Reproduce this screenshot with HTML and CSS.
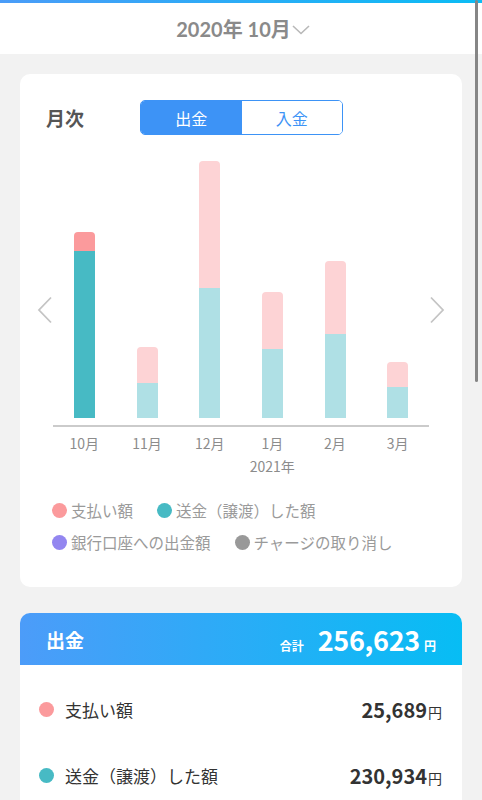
FILE: index.html
```html
<!DOCTYPE html>
<html lang="ja">
<head>
    <meta charset="UTF-8">
    <meta name="viewport" content="width=device-width, initial-scale=1.0">
    <title>月次レポート</title>
    <link rel="stylesheet" href="styles.css">
</head>
<body>
    <div class="topline"></div>
    <header class="month-header">
        <span class="month-title">2020年 10月</span>
        <svg class="month-caret" width="18" height="10" viewBox="0 0 18 10">
            <path d="M1 1 L9 8.5 L17 1" fill="none" stroke="#b8b8b8" stroke-width="1.6"/>
        </svg>
    </header>

    <main class="content">
        <section class="card chart-card">
            <div class="chart-head">
                <h2 class="chart-label">月次</h2>
                <div class="toggle">
                    <button class="toggle-btn active">出金</button>
                    <button class="toggle-btn">入金</button>
                </div>
            </div>

            <div class="chart-row">
                <svg class="chart-arrow" width="16" height="28" viewBox="0 0 16 28">
                    <path d="M14 1.5 L2 14 L14 26.5" fill="none" stroke="#c4c4c4" stroke-width="1.8"/>
                </svg>
                <div class="plot">
                    <div class="bars">
                        <div class="col">
                            <div class="bar current">
                                <div class="seg pay" style="height: 19px"></div>
                                <div class="seg send" style="height: 167px"></div>
                            </div>
                        </div>
                        <div class="col">
                            <div class="bar">
                                <div class="seg pay" style="height: 36px"></div>
                                <div class="seg send" style="height: 35px"></div>
                            </div>
                        </div>
                        <div class="col">
                            <div class="bar">
                                <div class="seg pay" style="height: 127px"></div>
                                <div class="seg send" style="height: 130px"></div>
                            </div>
                        </div>
                        <div class="col">
                            <div class="bar">
                                <div class="seg pay" style="height: 57px"></div>
                                <div class="seg send" style="height: 69px"></div>
                            </div>
                        </div>
                        <div class="col">
                            <div class="bar">
                                <div class="seg pay" style="height: 73px"></div>
                                <div class="seg send" style="height: 84px"></div>
                            </div>
                        </div>
                        <div class="col">
                            <div class="bar">
                                <div class="seg pay" style="height: 25px"></div>
                                <div class="seg send" style="height: 31px"></div>
                            </div>
                        </div>
                    </div>
                    <div class="axis"></div>
                    <div class="labels">
                        <span>10月</span>
                        <span>11月</span>
                        <span>12月</span>
                        <span>1月</span>
                        <span>2月</span>
                        <span>3月</span>
                        <span class="year">2021年</span>
                    </div>
                </div>
                <svg class="chart-arrow" width="16" height="28" viewBox="0 0 16 28">
                    <path d="M2 1.5 L14 14 L2 26.5" fill="none" stroke="#c4c4c4" stroke-width="1.8"/>
                </svg>
            </div>

            <ul class="legend">
                <li><span class="dot pay"></span>支払い額</li>
                <li><span class="dot send"></span>送金（譲渡）した額</li>
                <li><span class="dot bank"></span>銀行口座への出金額</li>
                <li><span class="dot cancel"></span>チャージの取り消し</li>
            </ul>
        </section>

        <section class="card total-card">
            <div class="total-head">
                <h2 class="total-title">出金</h2>
                <div class="total-sum">
                    <span class="sum-label">合計</span>
                    <span class="sum-value">256,623</span>
                    <span class="sum-yen">円</span>
                </div>
            </div>
            <ul class="breakdown">
                <li class="item">
                    <span class="dot pay"></span>
                    <span class="item-name">支払い額</span>
                    <span class="item-amount">25,689<small>円</small></span>
                </li>
                <li class="item">
                    <span class="dot send"></span>
                    <span class="item-name">送金（譲渡）した額</span>
                    <span class="item-amount">230,934<small>円</small></span>
                </li>
            </ul>
        </section>
    </main>

    <div class="scrollbar"></div>
</body>
</html>
```

FILE: styles.css
```css
* {
    margin: 0;
    padding: 0;
    box-sizing: border-box;
}

html {
    overflow: hidden;
}

body {
    font-family: "Noto Sans CJK JP", "Noto Sans", sans-serif;
    background-color: #f2f2f2;
    width: 482px;
    height: 800px;
    overflow: hidden;
    position: relative;
}

ul {
    list-style: none;
}

.topline {
    height: 3px;
    background: linear-gradient(90deg, #4a9cf8, #0bbcf4);
}

.month-header {
    height: 51px;
    background-color: white;
    display: flex;
    justify-content: center;
    align-items: center;
    gap: 1px;
    padding-left: 4px;
}

.month-title {
    font-family: Lato, "Noto Sans CJK JP", sans-serif;
    font-size: 20px;
    font-weight: bold;
    color: #8a8a8a;
}

.month-caret {
    margin-top: 2px;
}

.content {
    padding: 20px 20px 0;
}

.card {
    background-color: white;
    border-radius: 10px;
    overflow: hidden;
}

/* chart card */

.chart-card {
    padding: 26px 0 34px;
}

.chart-head {
    display: flex;
    align-items: center;
    height: 35px;
    padding-left: 26px;
}

.chart-label {
    font-size: 19px;
    font-weight: bold;
    color: #555;
    width: 94px;
}

.toggle {
    display: flex;
    width: 203px;
    height: 35px;
    border: 1.5px solid #3d93f6;
    border-radius: 5px;
    overflow: hidden;
}

.toggle-btn {
    flex: 1;
    border: none;
    background-color: white;
    color: #3d93f6;
    font-family: inherit;
    font-size: 16px;
}

.toggle-btn.active {
    background-color: #3d93f6;
    color: white;
}

.chart-row {
    display: flex;
    align-items: flex-start;
    padding: 0 17px;
    margin-top: 15px;
}

.chart-arrow {
    flex: none;
    margin-top: 146px;
}

.plot {
    width: 377px;
}

.bars {
    display: flex;
    height: 268px;
    align-items: flex-end;
}

.col {
    flex: 1;
    display: flex;
    justify-content: center;
}

.bar {
    width: 21px;
    border-radius: 4px 4px 0 0;
    overflow: hidden;
}

.seg.pay {
    background-color: #fdd3d5;
}

.seg.send {
    background-color: #afe0e5;
}

.bar.current .seg.pay {
    background-color: #fb9a9c;
}

.bar.current .seg.send {
    background-color: #47bac4;
}

.axis {
    height: 2px;
    margin-top: 7px;
    background-color: #cbcbcb;
}

.labels {
    display: grid;
    grid-template-columns: repeat(6, 1fr);
    text-align: center;
    font-size: 14px;
    line-height: 22px;
    color: #8c8c8c;
    margin-top: 5px;
}

.labels .year {
    grid-column: 4;
    line-height: 24px;
}

.legend {
    display: flex;
    flex-wrap: wrap;
    column-gap: 24px;
    row-gap: 10px;
    padding: 0 28px 0 32px;
    margin-top: 21px;
}

.legend li {
    display: flex;
    align-items: center;
    gap: 4px;
    font-size: 15.5px;
    line-height: 22px;
    color: #9a9a9a;
}

.dot {
    width: 15px;
    height: 15px;
    border-radius: 50%;
    flex: none;
}

.dot.pay {
    background-color: #fb9a9c;
}

.dot.send {
    background-color: #47bac4;
}

.dot.bank {
    background-color: #9386f0;
}

.dot.cancel {
    background-color: #999;
}

/* total card */

.total-card {
    margin-top: 26px;
    border-radius: 10px 10px 0 0;
}

.total-head {
    height: 52px;
    display: flex;
    align-items: center;
    justify-content: space-between;
    padding: 0 26px 0 26px;
    background: linear-gradient(90deg, #4c9cf9, #07bdf4);
    color: white;
}

.total-title {
    font-size: 19px;
    font-weight: bold;
}

.total-sum {
    display: flex;
    align-items: baseline;
}

.sum-label {
    font-size: 12px;
    font-weight: bold;
    margin-right: 14px;
}

.sum-value {
    font-size: 27px;
    font-weight: bold;
    letter-spacing: -0.3px;
}

.sum-yen {
    font-size: 12px;
    font-weight: bold;
    margin-left: 4px;
}

.breakdown {
    padding-top: 11px;
}

.item {
    display: flex;
    align-items: center;
    height: 66px;
    padding: 0 20px 0 19px;
}

.item .dot {
    margin-right: 11px;
}

.item-name {
    font-size: 17px;
    color: #333;
    flex: 1;
}

.item-amount {
    font-size: 20px;
    font-weight: bold;
    color: #333;
}

.item-amount small {
    font-size: 14px;
    font-weight: normal;
    margin-left: 1px;
}

.scrollbar {
    position: absolute;
    top: 0;
    right: 4px;
    width: 3px;
    height: 382px;
    border-radius: 2px;
    background-color: #868686;
}
```
